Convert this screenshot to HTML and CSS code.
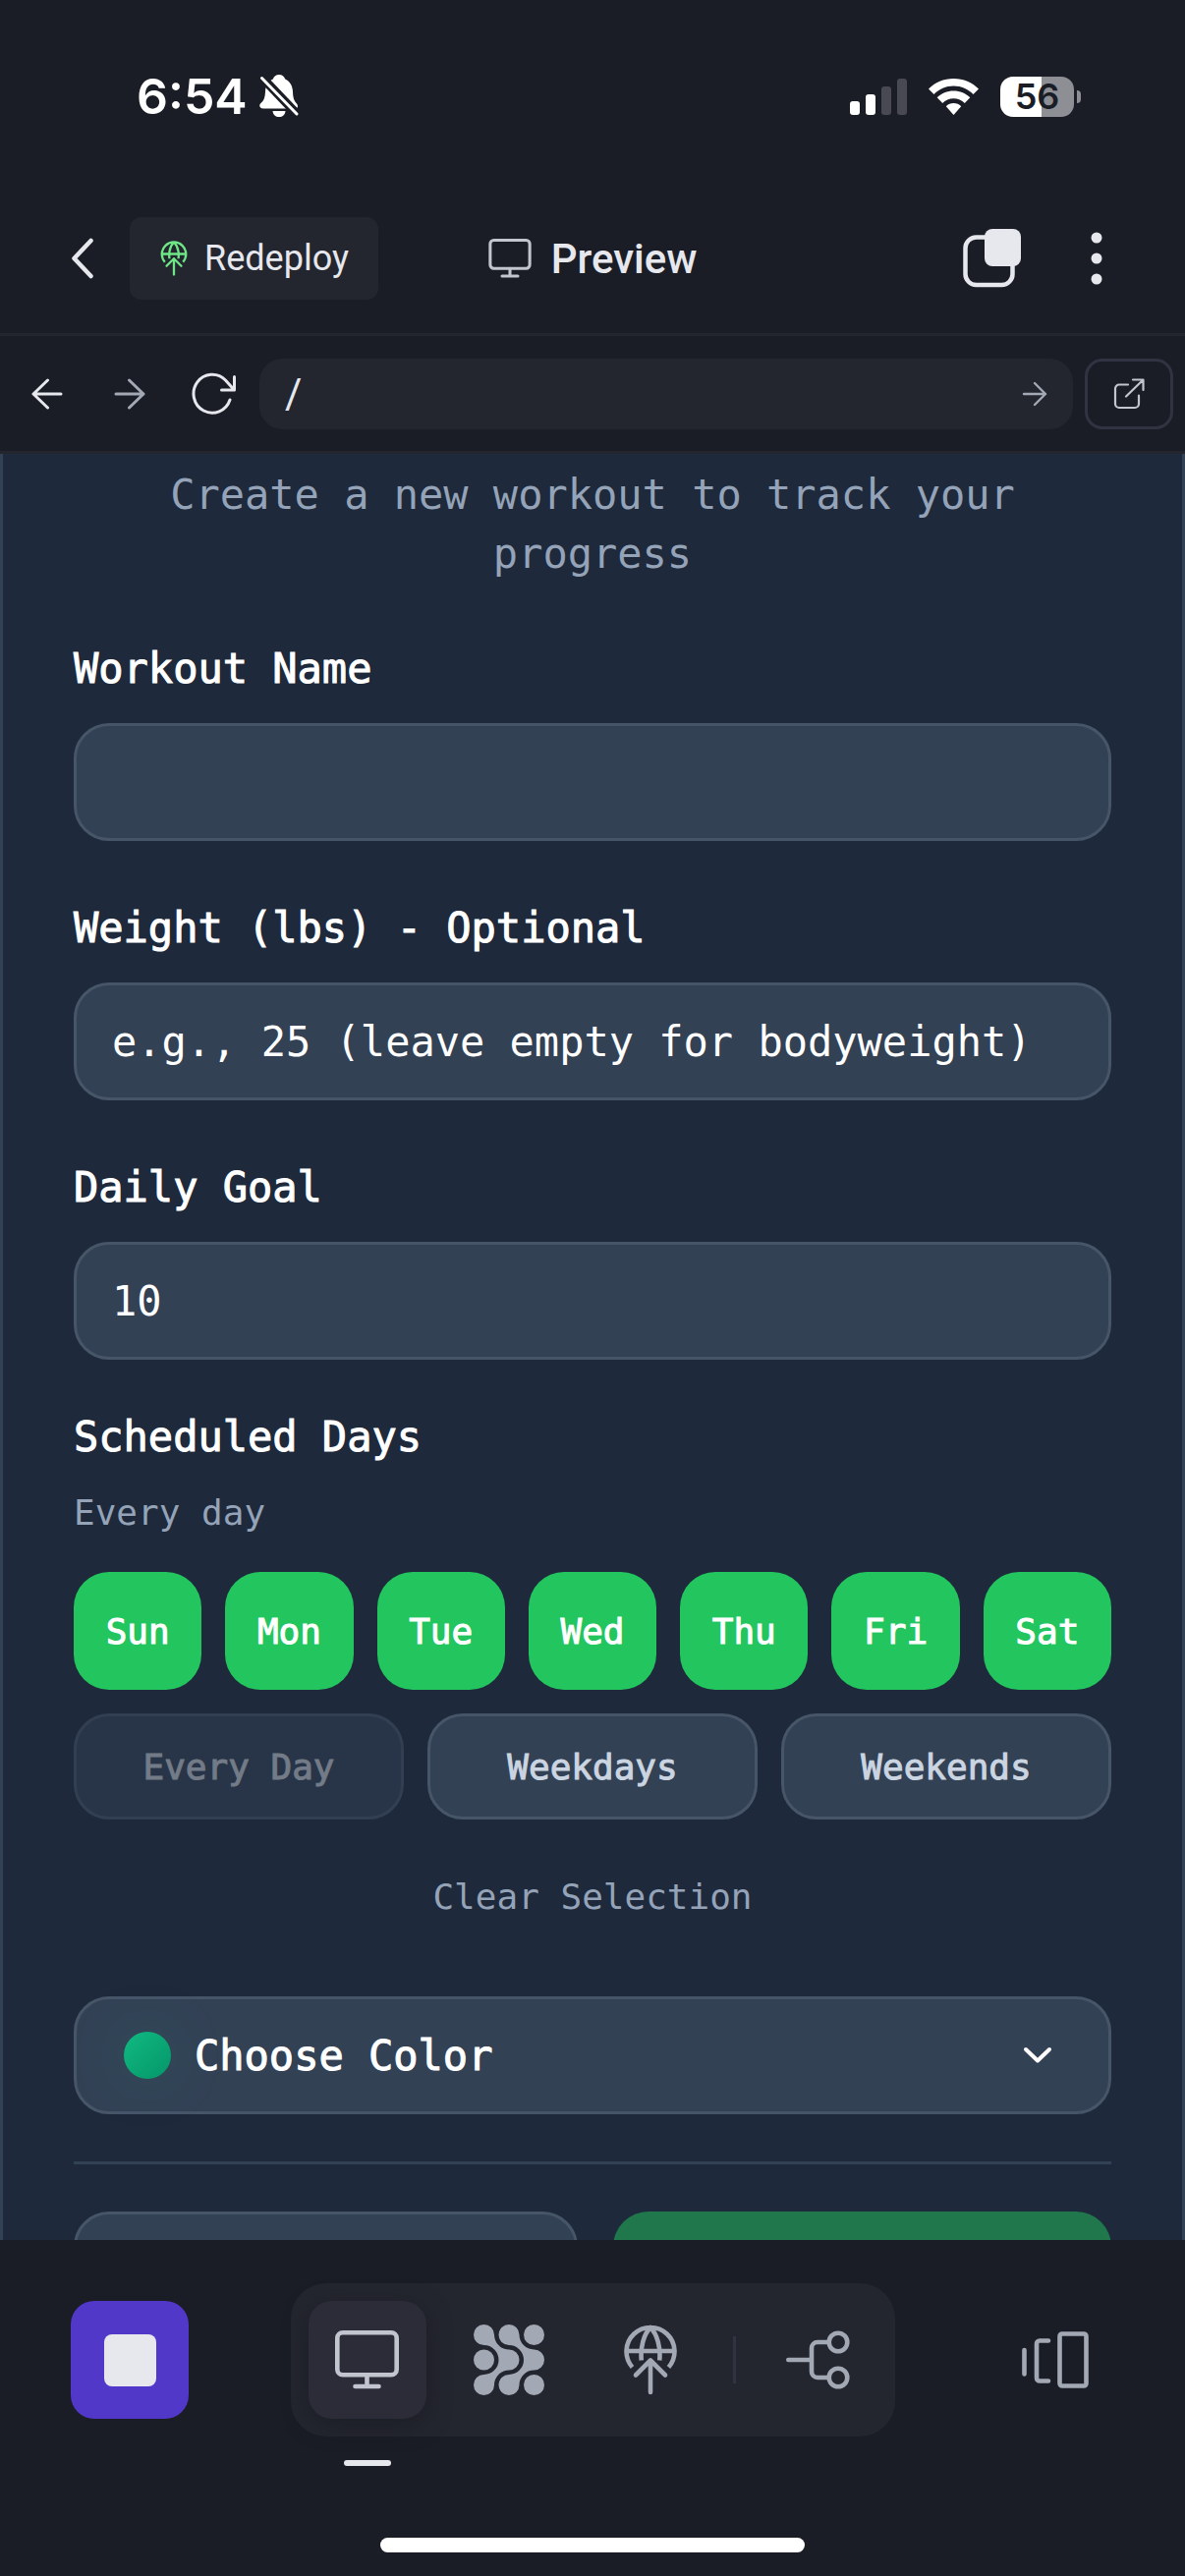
FILE: index.html
```html
<!DOCTYPE html>
<html lang="en">
<head>
<meta charset="utf-8">
<meta name="viewport" content="width=device-width, initial-scale=1">
<title>Preview</title>
<link rel="stylesheet" href="styles.css">
</head>
<body>
<svg class="defs" aria-hidden="true">
  <symbol id="monitor" viewBox="0 0 65 60">
    <g fill="none" stroke="currentColor" stroke-width="4.6" stroke-linecap="round">
      <rect x="2.3" y="2.3" width="60.4" height="43" rx="5.5"/>
      <path d="M32.5 45.500V57M20.500 57H44.500"/>
    </g>
  </symbol>
  <symbol id="deploy" viewBox="0 0 54 72">
    <g fill="none" stroke="currentColor" stroke-width="4.6" stroke-linecap="round" stroke-linejoin="round">
      <path stroke-linecap="butt" d="M8.500 43.500A24.500 24.500 0 1 1 45.500 43.500M2.500 27H51.500M17.800 36.500C16.500 24 20 10 27 3C34 10 37.500 24 36.200 36.500"/>
      <path d="M27 69V36.500M12 51.500L27 36.500L42 51.500"/>
    </g>
  </symbol>
</svg>

<header class="top">
  <div class="status">
    <div class="status-left">
      <span class="clock">6:54</span>
      <svg width="40" height="44" viewBox="0 0 40 44" aria-label="Silent">
        <path fill="#fff" d="M20 0C23 0 25.500 1.800 26.200 4.600C31.500 7 33.800 12 34 17.500C34.200 24 35.500 27 38 29.500C39.500 31 39.500 34.500 36.500 34.500H4C-.5 34.500-.5 30.500 1.500 29C4.500 26.500 5.800 23 6 17.500C6.200 12 8.500 7 13.800 4.600C14.500 1.800 17 0 20 0Z"/>
        <path fill="#fff" d="M13.500 37H26.500C26 41 23.500 43 20 43S14 41 13.500 37Z"/>
        <path stroke="#1a1d25" stroke-width="9" d="M-1 -1L41 43"/>
        <path stroke="#fff" stroke-width="3" stroke-linecap="round" d="M2.500 3.500L38 40"/>
      </svg>
    </div>
    <div class="status-right">
      <svg width="58" height="37" viewBox="0 0 58 37" aria-label="Signal">
        <rect y="23" width="10" height="14" rx="3" fill="#fff"/>
        <rect x="16" y="16" width="10" height="21" rx="3" fill="#fff"/>
        <rect x="32" y="8" width="10" height="29" rx="3" fill="#484953"/>
        <rect x="48" width="10" height="37" rx="3" fill="#484953"/>
      </svg>
      <svg width="51" height="37" viewBox="0 0 51 37" aria-label="Wi-Fi">
        <path fill="#fff" d="M25.500 0C35.500 0 44.500 4 51 10.500L45.500 16C40.300 10.800 33.300 7.600 25.500 7.600S10.700 10.800 5.500 16L0 10.500C6.500 4 15.500 0 25.500 0ZM25.500 12.500C32 12.500 38 15.100 42.300 19.300L36.800 25C33.900 22 29.900 20.200 25.500 20.200S17.100 22 14.200 25L8.700 19.300C13 15.100 19 12.500 25.500 12.500ZM25.500 25C28.500 25 31.200 26.200 33.200 28.200L25.500 37L17.800 28.200C19.800 26.200 22.500 25 25.500 25Z"/>
      </svg>
      <div class="battery"><span class="battery-level">56</span><i class="battery-tip"></i></div>
    </div>
  </div>

  <div class="titlebar">
    <div class="title-left">
      <button class="icon-button back" aria-label="Back">
        <svg width="24" height="42" viewBox="0 0 24 42" fill="none" stroke="currentColor" stroke-width="4.500" stroke-linecap="round" stroke-linejoin="round"><path d="M20.500 3L3.500 21L20.500 39"/></svg>
      </button>
      <button class="redeploy">
        <svg class="redeploy-icon"><use href="#deploy"/></svg>Redeploy
      </button>
    </div>
    <h1 class="title"><svg class="title-icon"><use href="#monitor"/></svg>Preview</h1>
    <div class="title-right">
      <button class="icon-button" aria-label="Tabs">
        <svg width="60" height="60" viewBox="0 0 60 60"><rect x="2.500" y="8.500" width="48" height="48.500" rx="11" fill="none" stroke="currentColor" stroke-width="4.500"/><rect x="22" y="0" width="37" height="38" rx="8" fill="currentColor"/></svg>
      </button>
      <button class="icon-button more" aria-label="More">
        <svg width="12" height="54" viewBox="0 0 12 54" fill="currentColor"><circle cx="6" cy="6" r="5.500"/><circle cx="6" cy="27" r="5.500"/><circle cx="6" cy="48" r="5.500"/></svg>
      </button>
    </div>
  </div>

  <nav class="addressbar" aria-label="Browser">
    <button class="nav-button" aria-label="Go back">
      <svg width="32" height="32" viewBox="0 0 32 32" fill="none" stroke="currentColor" stroke-width="3" stroke-linecap="round" stroke-linejoin="round"><path d="M30 16H2M16.500 2L2 16L16.500 30"/></svg>
    </button>
    <button class="nav-button dim" aria-label="Go forward">
      <svg width="32" height="32" viewBox="0 0 32 32" fill="none" stroke="currentColor" stroke-width="3" stroke-linecap="round" stroke-linejoin="round"><path d="M2 16H30M15.500 2L30 16L15.500 30"/></svg>
    </button>
    <button class="nav-button" aria-label="Reload">
      <svg width="48" height="46" viewBox="-4 0 48 46" fill="none" stroke="currentColor" stroke-width="3" stroke-linecap="round" stroke-linejoin="round"><path d="M38 29.500A18.500 21 0 0 1 20.500 44.500" stroke="none"/><path d="M38 29A19 19.500 0 1 1 33.500 9L42 18.500M42.500 5.500V19H29.500"/></svg>
    </button>
    <div class="url">
      <input class="url-input" type="text" value="/" aria-label="Path">
      <button class="icon-button dim" aria-label="Go">
        <svg width="26" height="26" viewBox="0 0 26 26" fill="none" stroke="currentColor" stroke-width="2.400" stroke-linecap="round" stroke-linejoin="round"><path d="M2 13H24M13 2L24 13L13 24"/></svg>
      </button>
    </div>
    <button class="external" aria-label="Open in new tab">
      <svg width="32" height="32" viewBox="0 0 32 32" fill="none" stroke="currentColor" stroke-width="2.200" stroke-linecap="round" stroke-linejoin="round"><path d="M15 6.500H6A4 4 0 0 0 2 10.500V26A4 4 0 0 0 6 30H22A4 4 0 0 0 26 26V17.500M13 18.500L30 2M20 1.500H30.500V12"/></svg>
    </button>
  </nav>
</header>

<main class="viewport">
  <form class="form">
    <p class="subtitle">Create a new workout to track your progress</p>

    <div class="field">
      <label class="label" for="name">Workout Name</label>
      <input class="input" id="name" type="text">
    </div>
    <div class="field">
      <label class="label" for="weight">Weight (lbs) - Optional</label>
      <input class="input" id="weight" type="text" placeholder="e.g., 25 (leave empty for bodyweight)">
    </div>
    <div class="field">
      <label class="label" for="goal">Daily Goal</label>
      <input class="input" id="goal" type="text" inputmode="numeric" value="10">
    </div>

    <section class="schedule" aria-labelledby="days">
      <h2 class="label" id="days">Scheduled Days</h2>
      <p class="summary">Every day</p>
      <div class="days">
        <button type="button" class="day">Sun</button>
        <button type="button" class="day">Mon</button>
        <button type="button" class="day">Tue</button>
        <button type="button" class="day">Wed</button>
        <button type="button" class="day">Thu</button>
        <button type="button" class="day">Fri</button>
        <button type="button" class="day">Sat</button>
      </div>
      <div class="presets">
        <button type="button" class="preset" disabled>Every Day</button>
        <button type="button" class="preset">Weekdays</button>
        <button type="button" class="preset">Weekends</button>
      </div>
      <button type="button" class="clear">Clear Selection</button>
    </section>

    <button type="button" class="color">
      <span class="swatch"></span>
      <span class="color-text">Choose Color</span>
      <svg width="30" height="20" viewBox="0 0 30 20" fill="none" stroke="currentColor" stroke-width="4" stroke-linecap="round" stroke-linejoin="round"><path d="M3 4L15 15.500L27 4"/></svg>
    </button>

    <div class="actions">
      <button type="button" class="action cancel" aria-label="Cancel"></button>
      <button type="submit" class="action submit" aria-label="Create"></button>
    </div>
  </form>
</main>

<footer class="bottom">
  <div class="dock">
    <button class="stop" aria-label="Stop"><span class="stop-glyph"></span></button>
    <div class="tabs">
      <button class="tab active" aria-label="Preview"><svg width="65" height="60"><use href="#monitor"/></svg></button>
      <button class="tab" aria-label="Agent">
        <svg width="72" height="72" viewBox="0 0 72 72" fill="currentColor">
          <path d="M10.500 0A10.500 10.500 0 0 1 21 10.500A15 15 0 0 0 36 25.500A10.500 10.500 0 0 1 36 46.500A15 15 0 0 0 21 61.500A10.500 10.500 0 1 1 10.500 51A15 15 0 0 0 10.500 21A10.500 10.500 0 0 1 10.500 0Z"/>
          <path transform="translate(25.500)" d="M10.500 0A10.500 10.500 0 0 1 21 10.500A15 15 0 0 0 36 25.500A10.500 10.500 0 0 1 36 46.500A15 15 0 0 0 21 61.500A10.500 10.500 0 1 1 10.500 51A15 15 0 0 0 10.500 21A10.500 10.500 0 0 1 10.500 0Z"/>
          <circle cx="10.500" cy="36" r="10.500"/><circle cx="61.500" cy="10.500" r="10.500"/><circle cx="61.500" cy="61.500" r="10.500"/>
        </svg>
      </button>
      <button class="tab" aria-label="Deploy"><svg width="54" height="72"><use href="#deploy"/></svg></button>
      <span class="divider"></span>
      <button class="tab" aria-label="Version control">
        <svg width="65" height="60" viewBox="0 0 65 60" fill="none" stroke="currentColor" stroke-width="4.600" stroke-linecap="round"><path d="M2.300 30H26M43 12H32A6 6 0 0 0 26 18V42A6 6 0 0 0 32 48H43"/><circle cx="53" cy="12" r="9.300"/><circle cx="53" cy="48" r="9.300"/></svg>
      </button>
    </div>
    <button class="panels" aria-label="Switch panel">
      <svg width="68" height="58" viewBox="0 0 68 58" fill="none" stroke="currentColor" stroke-width="4.600" stroke-linecap="round"><path d="M2.500 19V43.500M27 9.500H18A3 3 0 0 0 15 12.500V47.500A3 3 0 0 0 18 50.500H27"/><rect x="38.500" y="2.500" width="27" height="53" rx="2.500"/></svg>
    </button>
  </div>
  <div class="home"></div>
</footer>
</body>
</html>
```
FILE: styles.css
```css
:root {
  --chrome: #1a1d25;
  --raised: #24262f;
  --higher: #2b2c38;
  --light: #e6e8ee;
  --dim: #a2a8b4;
  --page: #1e293b;
  --control: #334155;
  --outline: #475569;
  --muted: #94a3b8;
  --ui: Roboto, "Noto Sans", sans-serif;
  --mono: "DejaVu Sans Mono", "Liberation Mono", monospace;
}

* { box-sizing: border-box; }

body {
  margin: 0;
  height: 100vh;
  display: flex;
  flex-direction: column;
  background: var(--chrome);
  color: var(--light);
  font-family: var(--ui);
}

h1, h2, p { margin: 0; font-weight: inherit; }
svg { display: block; flex: none; }
.defs { position: absolute; width: 0; height: 0; }

button {
  display: flex;
  align-items: center;
  justify-content: center;
  margin: 0;
  padding: 0;
  border: 0;
  background: none;
  color: inherit;
  font: inherit;
}

input { min-width: 0; color: inherit; font: inherit; outline: 0; }

/* Status bar */
.status {
  display: flex;
  justify-content: space-between;
  padding: 72px 113px 0 139px;
}
.status-left { display: flex; align-items: center; gap: 12px; height: 52px; }
.clock {
  font: 600 50px/52px Inter, sans-serif;
  color: #fff;
}
.status-right { display: flex; align-items: center; gap: 22px; height: 52px; }
.battery {
  position: relative;
  width: 75px;
  height: 41px;
  border-radius: 13px;
  background: linear-gradient(90deg, #fff 56%, #8e8f94 56%);
  color: var(--chrome);
  font: 600 36px/41px Inter, sans-serif;
  text-align: center;
}
.battery-tip {
  position: absolute;
  right: -7px;
  top: 14px;
  width: 4px;
  height: 13px;
  border-radius: 0 4px 4px 0;
  background: #8e8f94;
}

/* Title bar */
.titlebar {
  display: grid;
  grid-template-columns: 1fr auto 1fr;
  align-items: center;
  margin-top: 97px;
  padding: 0 72px 34px;
}
.title-left { display: flex; align-items: center; gap: 36px; }
.redeploy {
  height: 84px;
  gap: 16px;
  padding: 0 30px;
  border-radius: 12px;
  background: var(--raised);
  font-size: 36px;
}
.redeploy-icon { width: 30px; height: 36px; color: #6ee786; }
.title {
  display: flex;
  align-items: center;
  gap: 20px;
  font-size: 42px;
  font-weight: 500;
}
.title-icon { width: 44px; height: 40px; color: #c2c5ce; }
.title-right { display: flex; align-items: center; justify-content: flex-end; gap: 58px; }
.more { width: 36px; }

/* Address bar */
.addressbar {
  display: flex;
  align-items: center;
  height: 123px;
  padding: 0 12px 0 6px;
  border-top: 3px solid var(--raised);
  border-bottom: 3px solid var(--raised);
}
.nav-button { width: 84px; height: 72px; }
.dim { color: var(--dim); }
.url {
  flex: 1;
  display: flex;
  align-items: center;
  height: 72px;
  margin: 0 12px 0 6px;
  padding: 0 26px;
  border-radius: 24px;
  background: var(--raised);
}
.url-input { flex: 1; padding: 0; border: 0; background: none; font-size: 42px; }
.external {
  width: 90px;
  height: 72px;
  border: 3px solid #323342;
  border-radius: 18px;
  color: #c2c5ce;
}

/* Previewed page */
.viewport {
  flex: 1;
  min-height: 0;
  overflow: hidden;
  background: var(--page);
  border: solid var(--control);
  border-width: 0 3px;
  color: #fff;
  font-family: var(--mono);
  font-size: 42px;
}
.form { display: flex; flex-direction: column; padding: 12px 72px 72px; }
.subtitle { margin-bottom: 66px; line-height: 60px; text-align: center; color: var(--muted); }
.field { display: flex; flex-direction: column; gap: 34px; margin-bottom: 68px; }
.label, .color-text, .day, .preset { -webkit-text-stroke: 1px currentColor; }
.label { line-height: 42px; }
.input {
  height: 120px;
  padding: 0 36px;
  border: 3px solid var(--outline);
  border-radius: 36px;
  background: var(--control);
}
.input::placeholder { color: #fff; opacity: 1; }

.schedule { margin-top: -10px; font-size: 36px; }
.schedule .label { font-size: 42px; }
.summary { margin: 32px 0 36px; line-height: 48px; color: var(--muted); }
.days, .presets { display: flex; gap: 24px; margin-bottom: 24px; }
.day, .preset { flex: 1; border-radius: 36px; }
.day { height: 120px; background: #22c55e; }
.preset {
  height: 108px;
  border: 3px solid var(--outline);
  background: var(--control);
  color: #cbd5e1;
}
.preset:disabled { opacity: .5; color: #c5ccd2; }
.clear { width: 100%; height: 108px; color: var(--muted); }

.color {
  height: 120px;
  margin: 48px 0;
  padding: 0 57px 0 48px;
  border: 3px solid var(--outline);
  border-radius: 36px;
  background: var(--control);
}
.swatch {
  width: 48px;
  height: 48px;
  margin-right: 24px;
  border-radius: 50%;
  background: linear-gradient(135deg, #10b981, #059669);
  box-shadow: 0 0 60px rgba(16, 185, 129, .2);
}
.color-text { flex: 1; text-align: left; }

.actions {
  display: flex;
  gap: 36px;
  padding-top: 48px;
  border-top: 3px solid var(--control);
}
.action { flex: 1; height: 120px; border-radius: 36px; }
.cancel { border: 3px solid var(--outline); background: var(--control); }
.submit { background: #20774c; }

/* Dock */
.bottom { padding: 44px 72px 24px; }
.dock { display: flex; align-items: center; justify-content: space-between; }
.stop, .tab, .panels { width: 120px; height: 120px; border-radius: 24px; }
.stop { background: #5138c9; }
.stop-glyph { width: 53px; height: 53px; border-radius: 8px; background: var(--light); }
.tabs {
  display: flex;
  align-items: center;
  gap: 24px;
  padding: 18px;
  border-radius: 36px;
  background: var(--raised);
}
.tab, .panels { color: var(--dim); }
.tab.active {
  position: relative;
  background: var(--higher);
  color: #c2c5ce;
  box-shadow: 0 6px 24px rgba(20, 21, 30, .5);
}
.tab.active::after {
  content: "";
  position: absolute;
  left: 36px;
  bottom: -48px;
  width: 48px;
  height: 6px;
  border-radius: 3px;
  background: var(--light);
}
.divider { width: 3px; height: 48px; background: #323342; }
.home {
  width: 432px;
  height: 15px;
  margin: 103px auto 0;
  border-radius: 8px;
  background: #fff;
}
```
